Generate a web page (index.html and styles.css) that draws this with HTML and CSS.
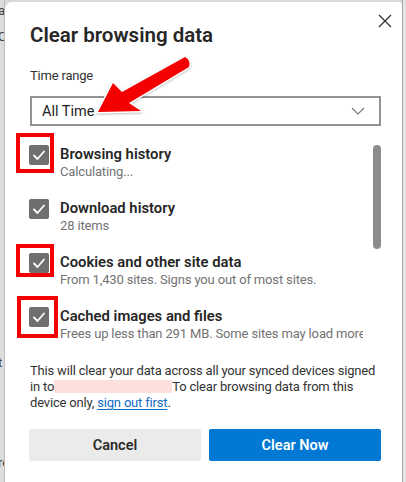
FILE: index.html
```html
<!DOCTYPE html>
<html lang="en">
<head>
<meta charset="utf-8">
<title>Clear browsing data</title>
<link rel="stylesheet" href="styles.css">
</head>
<body>
<div class="screen">
  <div class="backdrop-left">
    <span class="frag f1">a</span>
    <span class="frag f2">C</span>
    <span class="frag f3">t</span>
    <span class="frag f4">re</span>
  </div>
  <div class="dialog">
    <div class="header">
      <h1 class="title">Clear browsing data</h1>
      <button class="close" aria-label="Close">
        <svg width="14" height="14" viewBox="0 0 14 14"><path d="M1 1 L13 13 M13 1 L1 13" stroke="#333" stroke-width="1.3" fill="none"/></svg>
      </button>
    </div>
    <div class="label">Time range</div>
    <div class="select">
      <span>All Time</span>
      <svg class="chev" width="14" height="8" viewBox="0 0 14 8"><path d="M1 1 L7 7 L13 1" stroke="#7a7a7a" stroke-width="1.2" fill="none"/></svg>
    </div>
    <div class="list">
      <div class="items">
        <div class="item">
          <div class="cb hl hl1"><svg width="20" height="20" viewBox="0 0 20 20"><path d="M5 10.5 L8.5 14 L15 6.5" stroke="#fff" stroke-width="1.8" fill="none" stroke-linecap="round" stroke-linejoin="round"/></svg></div>
          <div class="text">
            <div class="name">Browsing history</div>
            <div class="desc">Calculating...</div>
          </div>
        </div>
        <div class="item">
          <div class="cb"><svg width="20" height="20" viewBox="0 0 20 20"><path d="M5 10.5 L8.5 14 L15 6.5" stroke="#fff" stroke-width="1.8" fill="none" stroke-linecap="round" stroke-linejoin="round"/></svg></div>
          <div class="text">
            <div class="name">Download history</div>
            <div class="desc">28 items</div>
          </div>
        </div>
        <div class="item">
          <div class="cb hl hl3"><svg width="20" height="20" viewBox="0 0 20 20"><path d="M5 10.5 L8.5 14 L15 6.5" stroke="#fff" stroke-width="1.8" fill="none" stroke-linecap="round" stroke-linejoin="round"/></svg></div>
          <div class="text">
            <div class="name">Cookies and other site data</div>
            <div class="desc">From 1,430 sites. Signs you out of most sites.</div>
          </div>
        </div>
        <div class="item">
          <div class="cb hl hl4"><svg width="20" height="20" viewBox="0 0 20 20"><path d="M5 10.5 L8.5 14 L15 6.5" stroke="#fff" stroke-width="1.8" fill="none" stroke-linecap="round" stroke-linejoin="round"/></svg></div>
          <div class="text">
            <div class="name">Cached images and files</div>
            <div class="desc">Frees up less than 291 MB. Some sites may load more</div>
          </div>
        </div>
      </div>
      <div class="scrollbar"><div class="thumb"></div></div>
    </div>
    <p class="note">This will clear your data across all your synced devices signed in to<span class="redact"></span>To clear browsing data from this device only, <a href="#" class="link">sign out first</a>.</p>
    <div class="buttons">
      <button class="btn cancel">Cancel</button>
      <button class="btn primary">Clear Now</button>
    </div>
    <svg class="arrow" width="406" height="140" viewBox="0 0 406 140">
      <path d="M98 112 L141 111 L129 103 L189 67 Q191 60 185 57 L122 92 L113 83 Z" fill="#f40000" stroke="#fff" stroke-width="3" stroke-linejoin="round" paint-order="stroke"/>
    </svg>
  </div>
  <div class="backdrop-right"></div>
</div>
</body>
</html>
```

FILE: styles.css
```css
* { box-sizing: border-box; }
html, body { margin: 0; padding: 0; }
body {
  width: 406px;
  height: 482px;
  overflow: hidden;
  background: #d9d9d9;
  font-family: Roboto, "Liberation Sans", sans-serif;
  color: #2b2b2b;
}
.screen {
  display: flex;
  height: 482px;
  padding-top: 2px;
  position: relative;
}
.backdrop-left {
  width: 5px;
  overflow: hidden;
  display: flex;
  flex-direction: column;
  background: #dcdcdc;
  border-right: 1px solid #bdbdbd;
  margin-top: -2px;
  font-size: 13px;
  color: #444;
}
.frag { display: block; white-space: nowrap; line-height: 14px; margin-left: -2px; }
.f1 { margin-top: 4px; }
.f2 { margin-top: 12px; }
.f3 { margin-top: 312px; }
.f4 { margin-top: 86px; }
.backdrop-right {
  width: 4px;
  background: #e4e4e4;
  border-left: 1px solid #a8a8a8;
  margin-top: -2px;
}
.dialog {
  position: relative;
  width: 397px;
  background: #fff;
  border-top-left-radius: 7px;
  border-top-right-radius: 4px;
  padding: 21px 21px 0 25px;
}
.header {
  display: flex;
  justify-content: space-between;
  align-items: flex-start;
}
.title {
  margin: 0;
  font-size: 20.5px;
  line-height: 24px;
  font-weight: 600;
  color: #262626;
}
.close {
  border: none;
  background: none;
  padding: 0;
  margin: -9px -11px 0 0;
  width: 14px;
  height: 14px;
  display: flex;
}
.label {
  margin-top: 21px;
  font-size: 13px;
  letter-spacing: -0.2px;
  line-height: 16px;
  color: #333;
}
.select {
  margin-top: 12px;
  height: 30px;
  border: 2px solid #939393;
  display: flex;
  align-items: center;
  justify-content: space-between;
  padding: 0 14px 0 10px;
  font-size: 14.5px;
  color: #222;
}
.chev { display: block; }
.list {
  margin-top: 7px;
  margin-left: -14px;
  padding: 12px 0 0 13px;
  height: 213px;
  overflow: hidden;
  display: flex;
}
.items { flex: 1; min-width: 0; display: flex; flex-direction: column; }
.item {
  display: flex;
  gap: 11px;
  height: 54px;
  flex-shrink: 0;
}
.text { min-width: 0; overflow: hidden; }
.cb {
  position: relative;
  width: 20px;
  height: 20px;
  flex-shrink: 0;
  background: #6f6f6f;
  border-radius: 2px;
}
.cb svg { display: block; }
.hl::before {
  content: "";
  position: absolute;
  border: 4px solid #f50000;
}
.hl1::before { left: -13px; right: -5px; top: -12px; bottom: -8px; }
.hl3::before { left: -13px; right: -5px; top: -9px; bottom: -4px; }
.hl4::before { left: -12px; right: -9px; top: -11px; bottom: -11px; }
.name {
  font-size: 14.8px;
  line-height: 18px;
  font-weight: 600;
  color: #262626;
  white-space: nowrap;
}
.desc {
  font-size: 13px;
  letter-spacing: -0.15px;
  line-height: 17px;
  color: #737373;
  white-space: nowrap;
}
.scrollbar { width: 8px; margin-left: 10px; flex-shrink: 0; }
.thumb {
  width: 8px;
  height: 104px;
  background: #8c8c8c;
  border-radius: 4px;
}
.note {
  margin: 17px 0 0;
  font-size: 13px;
  letter-spacing: -0.18px;
  line-height: 16px;
  color: #333;
}
.redact {
  display: inline-block;
  width: 118px;
  height: 13px;
  vertical-align: -2px;
  background: #fde0dc;
}
.link {
  color: #0f6cc4;
  text-decoration: underline;
  text-underline-offset: 2px;
}
.buttons {
  margin-top: 18px;
  display: flex;
  gap: 8px;
  margin-left: -1px;
}
.btn {
  flex: 1;
  height: 32px;
  border: none;
  border-radius: 2px;
  font-family: inherit;
  font-size: 14.5px;
  font-weight: 600;
}
.cancel { background: #ebebeb; color: #2b2b2b; }
.primary { background: #0078d4; color: #fff; }
.arrow {
  position: absolute;
  left: -5px;
  top: -2px;
  pointer-events: none;
  filter: drop-shadow(0 1px 1px rgba(0,0,0,0.25));
}
```
